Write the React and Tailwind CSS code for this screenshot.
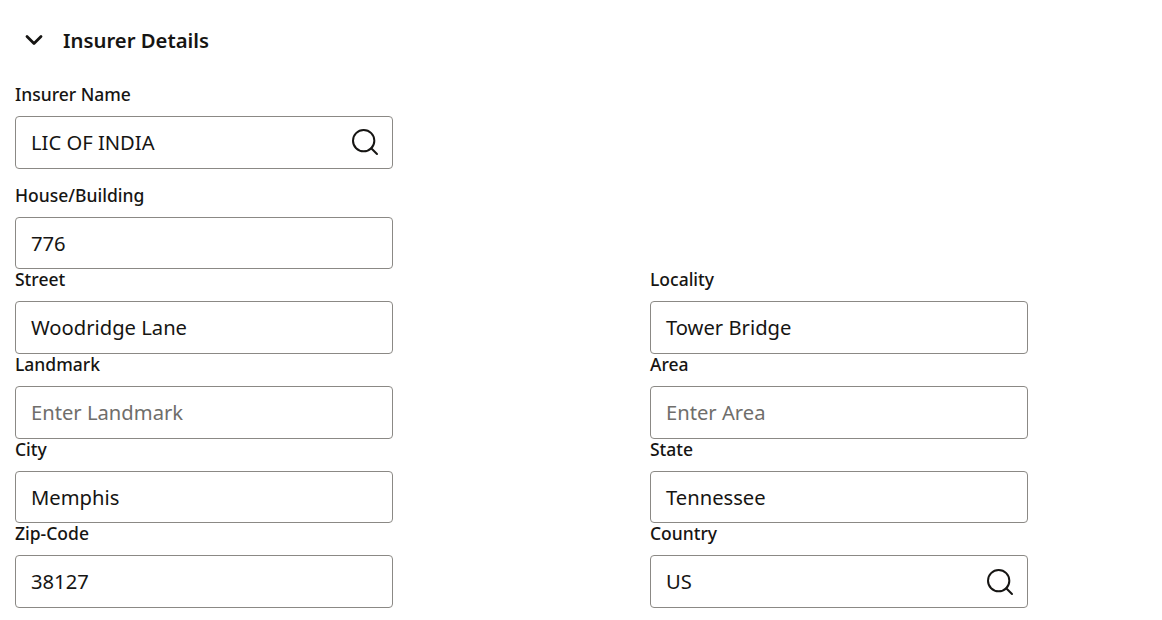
import { ChevronDown, Search } from "lucide-react";

function Field({ label, value, placeholder, search, className = "" }) {
  return (
    <div className={"w-[378px] " + className}>
      <label className="block h-[32px] text-[17.5px] font-medium leading-[20px] text-[#161513]">{label}</label>
      <div className="flex h-[52.67px] items-center rounded-[4px] border border-[#8b8985] bg-white pl-[15px] pr-[11px]">
        <span className={"flex-1 text-[20.2px] " + (value ? "text-[#161513]" : "text-[#6f6e6b]")}>
          {value || placeholder}
        </span>
        {search && <Search size={32} strokeWidth={1.5} className="text-[#161513]" />}
      </div>
    </div>
  );
}

export default function App() {
  return (
    <div className="min-h-screen bg-white pl-[15px] font-['Noto_Sans',sans-serif]">
      <div className="flex h-[84px] items-center pb-[4px] pl-[5px]">
        <ChevronDown size={28} strokeWidth={2.4} className="text-[#161513]" />
        <h2 className="ml-[15px] text-[20.3px] font-semibold text-[#161513]">Insurer Details</h2>
      </div>
      <Field label="Insurer Name" value="LIC OF INDIA" search />
      <Field label="House/Building" value="776" className="mt-[16px]" />
      <div className="grid w-[1013px] grid-cols-[635px_378px]">
        <Field label="Street" value="Woodridge Lane" />
        <Field label="Locality" value="Tower Bridge" />
        <Field label="Landmark" placeholder="Enter Landmark" />
        <Field label="Area" placeholder="Enter Area" />
        <Field label="City" value="Memphis" />
        <Field label="State" value="Tennessee" />
        <Field label="Zip-Code" value="38127" />
        <Field label="Country" value="US" search />
      </div>
    </div>
  );
}
